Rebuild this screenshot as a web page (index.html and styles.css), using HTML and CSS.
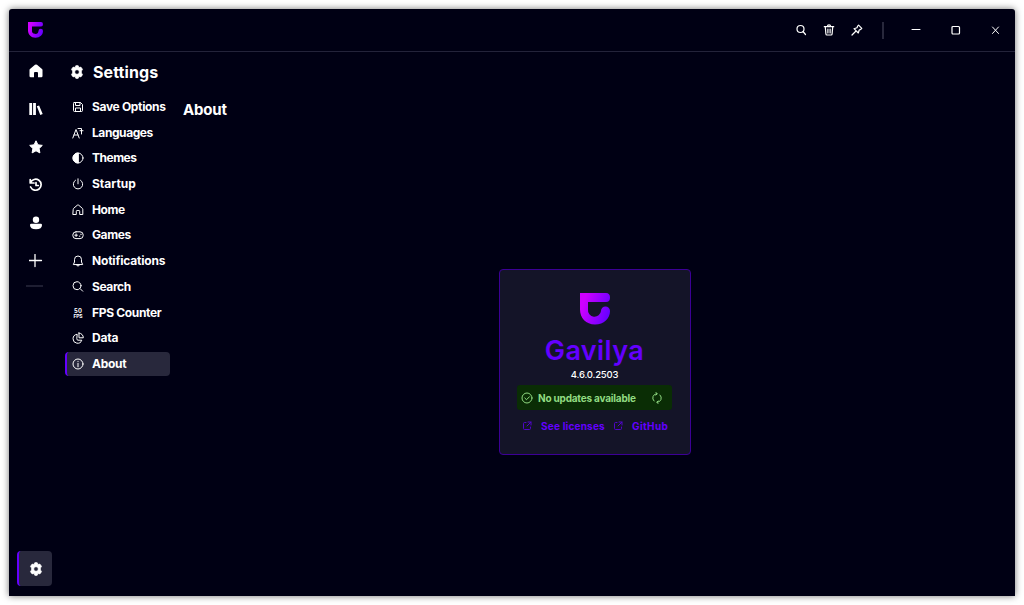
FILE: index.html
```html
<!DOCTYPE html>
<html lang="en">
<head>
<meta charset="utf-8">
<title>Gavilya</title>
<link rel="stylesheet" href="styles.css">
</head>
<body>
<svg class="defs" width="0" height="0" aria-hidden="true">
  <defs>
    <linearGradient id="brand" x1="0" y1="0.3" x2="1" y2="0.65"><stop offset="0.1" stop-color="#cf00ff"/><stop offset="1" stop-color="#6400ff"/></linearGradient>
    <symbol id="logo" viewBox="0 0 30 32"><path fill="url(#brand)" d="M0 0h26q4 0 4 4.500T26 9H8v7.500a6.500 6.500 0 0 0 13 1.500a4.500 4.500 0 0 1 9 0c0 7.500-6 13.500-15 13.500S0 25 0 16.500z"/></symbol>
    <symbol id="gear" viewBox="0 0 14 14"><path fill="currentColor" stroke="currentColor" stroke-width=".7" stroke-linejoin="round" fill-rule="evenodd" d="M5.700.8Q7 .4 8.300.8l.6 1.700 1.900-.4q1.200 1 1.700 2.500L11.400 6v2l1.100 1.400q-.5 1.500-1.700 2.500l-1.900-.4-.6 1.700q-1.300.4-2.600 0l-.6-1.700-1.900.4q-1.200-1-1.700-2.500L2.600 8V6L1.500 4.600q.5-1.500 1.700-2.500l1.900.4z M7 4.700a2.300 2.300 0 1 0 0 4.600 2.300 2.300 0 0 0 0-4.600z"/></symbol>
    <symbol id="open" viewBox="0 0 10 10"><path d="M4 1.500H2.500a1 1 0 0 0-1 1v5a1 1 0 0 0 1 1h5a1 1 0 0 0 1-1V6M6 1h3v3M9 1L5 5"/></symbol>
  </defs>
</svg>
<div class="window">
  <header class="titlebar">
    <svg class="brand"><use href="#logo"/></svg>
    <div class="tools">
      <svg class="line bold" viewBox="0 0 12 12"><circle cx="5.500" cy="5" r="3.500"/><path d="M8 7.500l2.500 3"/></svg>
      <svg class="line bold" viewBox="0 0 12 12"><path d="M1.300 2.700h9.400M4.400 2.500a1.600 1.600 0 0 1 3.200 0M2.300 3l.6 7q.1 1 1 1h4.200q.9 0 1-1l.6-7M4.900 5v4M7.100 5v4"/></svg>
      <svg class="line bold" viewBox="0 0 12 12"><path d="M7.600 1.200l3.200 3.200-1 1L8.200 6l-.9 3L3 4.700l3-.9.600-1.600zM5 7l-4 4"/></svg>
    </div>
    <i class="split"></i>
    <div class="controls">
      <svg class="line" viewBox="0 0 12 12"><path d="M2 5.500h8"/></svg>
      <svg class="line bold" viewBox="0 0 12 12"><rect x="2" y="2.500" width="7.500" height="7.500" rx="1"/></svg>
      <svg class="line" viewBox="0 0 12 12"><path d="M2.500 3l6 6.500M8.500 3l-6 6.500"/></svg>
    </div>
  </header>
  <div class="body">
    <nav class="rail">
      <a class="tab"><svg viewBox="0 0 14 14"><path fill="currentColor" d="M6 .8q1-.8 2 0l4.700 4Q13.500 5.300 13.500 6v6q0 1.200-1.200 1.200H9V9q0-1-1-1H6Q5 8 5 9v4.200H1.800Q.5 13.200.5 12V6q0-.7.800-1.200z"/></svg></a>
      <a class="tab"><svg viewBox="0 0 14 14"><path fill="currentColor" d="M.3 1h2.800v12H.3zM4.100 1h2.800v12H4.100zM7.800 4.300l2.300-.7 3.600 8.500-2.400.9z"/></svg></a>
      <a class="tab"><svg viewBox="0 0 14 14"><path fill="currentColor" stroke="currentColor" stroke-linejoin="round" d="M7 .8l1.900 4 4.400.6-3.200 3.100.8 4.400L7 10.800l-3.900 2.100.8-4.400L.7 5.400l4.400-.6z"/></svg></a>
      <a class="tab"><svg class="line heavy" viewBox="0 0 14 14"><path d="M1.200 1.500V5H5M1.500 4.700A5.500 5.500 0 1 1 1.600 9M7 4.500v3h2.300"/></svg></a>
      <a class="tab"><svg viewBox="0 0 14 14"><circle cx="7" cy="3.700" r="3.200" fill="currentColor"/><path fill="currentColor" d="M2.200 7.800h9.600q1.200 0 1.200 1.200 0 4.200-6 4.200T1 9q0-1.200 1.200-1.200z"/></svg></a>
      <a class="tab"><svg class="line heavy plus" viewBox="0 0 14 14"><path d="M6 .5v12M0 6.500h12.500"/></svg></a>
      <i class="rule"></i>
      <a class="tab current"><svg><use href="#gear"/></svg></a>
    </nav>
    <aside class="settings">
      <h1><svg><use href="#gear"/></svg><span>Settings</span></h1>
      <ul>
        <li><svg class="line" viewBox="0 0 12 12"><path d="M2 1.500h6.500l2 2v6q0 1-1 1H2.500q-1 0-1-1V2.500q0-1 1-1M3.500 1.500v3H8v-3M3.500 10.500V7h5v3.500"/></svg><span class="t-save">Save Options</span></li>
        <li><svg class="line" viewBox="0 0 12 12"><path d="M.8 11L4 2.500 7.200 11M2 8h4M6 1.500h3.500V7M8 3.700h3"/></svg><span class="t-lang">Languages</span></li>
        <li><svg class="line" viewBox="0 0 12 12"><circle cx="6" cy="6" r="5"/><path fill="currentColor" d="M6 1a5 5 0 0 0 0 10z"/></svg><span class="t-theme">Themes</span></li>
        <li><svg class="line" viewBox="0 0 12 12"><path d="M6 .8v5M3.500 2.200a4.700 4.700 0 1 0 5 0"/></svg><span class="t-start">Startup</span></li>
        <li><svg class="line" viewBox="0 0 12 12"><path d="M1.200 5.200Q1.200 4.700 1.700 4.300L5.300 1.200q.7-.5 1.400 0l3.600 3.100q.5.400.5.900v5.300H7.700V7.300q0-.8-.8-.8H5.100q-.8 0-.8.800v3.200H1.200z"/></svg><span class="t-home">Home</span></li>
        <li><svg class="line" viewBox="0 0 12 12"><rect x=".8" y="2.800" width="10.400" height="6.800" rx="3.200"/><path d="M2.800 6.200h2.600M4.100 4.900v2.600M7.300 7.200h.6M8.700 5.300h.6"/></svg><span class="t-games">Games</span></li>
        <li><svg class="line" viewBox="0 0 12 12"><path d="M1.500 9.200L2.500 7V4.500a3.500 3.500 0 0 1 7 0V7l1 2.200zM4.500 9.500a1.500 1.500 0 0 0 3 0"/></svg><span class="t-notif">Notifications</span></li>
        <li><svg class="line" viewBox="0 0 12 12"><circle cx="5" cy="4.700" r="4"/><path d="M8 7.500l2.700 2.700"/></svg><span class="t-search">Search</span></li>
        <li><svg viewBox="0 0 12 12"><text class="fps" x="6" y="5.800" textLength="8">50</text><text class="fps low" x="6" y="11" textLength="9">FPS</text></svg><span class="t-fps">FPS Counter</span></li>
        <li><svg class="line pie" viewBox="0 0 12 12"><path d="M4.800 2.300a4.500 4.500 0 1 0 5 5.900H6q-1.200 0-1.200-1.200zM7 1v4.800h4.300A4.600 4.600 0 0 0 7 1z"/></svg><span class="t-data">Data</span></li>
        <li class="current"><svg class="line" viewBox="0 0 12 12"><circle cx="6" cy="6" r="5"/><path d="M6 5.300v3.500M6 3.300v.2"/></svg><span class="t-about">About</span></li>
      </ul>
    </aside>
    <main>
      <h2>About</h2>
      <section class="stage">
        <article class="card">
          <svg class="mark"><use href="#logo"/></svg>
          <h3>Gavilya</h3>
          <p class="version">4.6.0.2503</p>
          <div class="status">
            <svg class="line" viewBox="0 0 12 12"><circle cx="6" cy="6" r="5"/><path d="M3.800 6l1.700 1.700 3-3"/></svg>
            <span>No updates available</span>
            <svg class="line" viewBox="0 0 12 12"><path d="M3 9A4.300 4.300 0 0 1 5.800 1.700M4.800.5L6.300 1.700 4.800 3M9 3a4.300 4.300 0 0 1-2.800 7.300M7.200 9L5.700 10.300l1.500 1.200"/></svg>
          </div>
          <div class="links">
            <svg class="line"><use href="#open"/></svg><a class="licenses">See licenses</a>
            <svg class="line"><use href="#open"/></svg><a class="github">GitHub</a>
          </div>
        </article>
      </section>
    </main>
  </div>
</div>
</body>
</html>
```
FILE: styles.css
```css
* { box-sizing: border-box; margin: 0; padding: 0; }
body { width: 1024px; height: 605px; padding: 9px; background: #fff; overflow: hidden; font: 700 12px/1 Inter, sans-serif; color: #fff; }
svg { display: block; flex: none; }
.defs { position: absolute; }
span, h2, h3, a, p { white-space: nowrap; }
.line { fill: none; stroke: currentColor; stroke-width: 1; stroke-linecap: round; stroke-linejoin: round; }
.line.bold { stroke-width: 1.2; }
.line.heavy { stroke-width: 1.7; }
.line.plus { stroke-width: 1.3; }
.window { width: 1006px; height: 587px; display: flex; flex-direction: column; background: #000014; border-radius: 3px 3px 0 0; box-shadow: 0 0 7px rgba(0,0,0,.55); }
.titlebar { height: 43px; display: flex; align-items: center; border-bottom: 1px solid #23233a; padding: 0 13px 0 19px; }
.brand { width: 15px; height: 16px; margin-right: auto; }
.tools { display: flex; gap: 16px; padding-left: 1px; }
.tools svg, .controls svg { width: 12px; height: 12px; }
.split { width: 2px; height: 17px; background: #28283c; margin: 0 26px 0 19px; }
.controls { display: flex; gap: 28px; }
.body { flex: 1; display: flex; min-height: 0; }
.rail { width: 56px; padding: 1px 0 10px 8px; display: flex; flex-direction: column; gap: 3px; }
.tab { width: 35px; height: 35px; border-radius: 4px; display: grid; place-items: center; padding-left: 2px; }
.tab svg { width: 14px; height: 14px; }
.rule { width: 17px; height: 2px; background: #1e1e32; margin: 4px 0 0 9px; }
.tab.current { margin-top: auto; background: #28283c; border-left: 2px solid #6400ff; padding: 0; }
.settings { width: 105px; }
h1 { height: 39px; display: flex; align-items: center; gap: 9px; padding-left: 5px; font-size: 16px; letter-spacing: .1px; }
h1 svg { width: 14px; height: 14px; }
ul { list-style: none; display: grid; gap: 1.7px; padding-top: 4px; }
li { height: 24px; display: flex; align-items: center; gap: 8.5px; padding-left: 6.5px; border-radius: 4px; }
li svg { width: 12px; height: 12px; }
li.current { background: #28283c; border-left: 2px solid #6400ff; padding-left: 4.5px; }
.fps { font-size: 5.8px; font-weight: 700; text-anchor: middle; fill: currentColor; }
.fps.low { font-size: 5px; }
.t-save { letter-spacing: -.33px; }
.t-lang { letter-spacing: -.43px; }
.t-theme { letter-spacing: -.5px; }
.t-home { letter-spacing: -.4px; }
.t-games { letter-spacing: -.4px; }
.t-notif { letter-spacing: -.18px; }
.t-search { letter-spacing: -.4px; }
.t-fps { letter-spacing: -.33px; }
.t-data { letter-spacing: -.2px; }
.t-about { letter-spacing: -.3px; }
main { flex: 1; display: flex; flex-direction: column; padding: 50px 0 0 13px; }
h2 { font-size: 15px; letter-spacing: -.2px; }
.stage { flex: 1; display: flex; align-items: flex-start; justify-content: center; padding: 152px 9px 0 0; }
.card { width: 192px; height: 186px; background: #141428; border: 1px solid #3c0096; border-radius: 4px; display: flex; flex-direction: column; align-items: center; padding-top: 23px; }
.mark { width: 30px; height: 32px; }
h3 { font-size: 27px; line-height: 32px; font-weight: 600; letter-spacing: .4px; color: #6400ff; margin-top: 10px; }
.version { font-size: 9.5px; line-height: 10px; font-weight: 500; letter-spacing: -.2px; margin-top: 3px; }
.status { width: 155px; height: 25px; margin-top: 5px; background: #0a2d05; color: #91dc82; border-radius: 3px; display: flex; align-items: center; padding: 0 9px 0 4px; font-size: 10px; letter-spacing: -.2px; }
.status svg { width: 12px; height: 12px; }
.status span { margin: 0 auto 0 5px; }
.links { width: 155px; height: 32px; display: flex; align-items: center; padding-left: 5px; color: #6400ff; font-size: 10px; letter-spacing: .2px; }
.links svg { width: 10px; height: 10px; opacity: .75; }
.links a { margin-left: 9px; }
.licenses { width: 64px; margin-right: 8px; }
.github { letter-spacing: .4px; }
```
